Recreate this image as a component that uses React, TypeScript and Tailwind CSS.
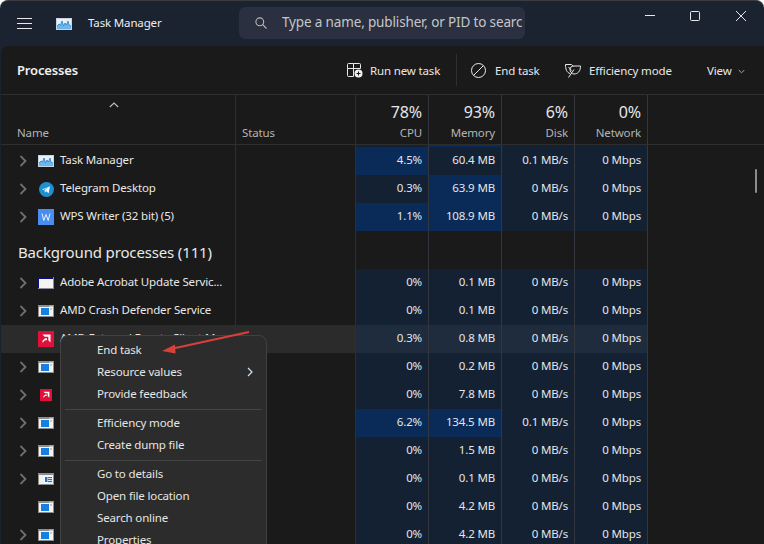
import React from 'react';

type Row = {
  name?: string;
  icon: 'tm' | 'tg' | 'wps' | 'adobe' | 'svc' | 'amd' | 'amdsmall' | 'svc2';
  chevron?: boolean;
  cpu: string;
  mem: string;
  disk: string;
  cpuHot?: boolean;
  memHot?: boolean;
  hover?: boolean;
};

const appRows: Row[] = [
  { name: 'Task Manager', icon: 'tm', chevron: true, cpu: '4.5%', mem: '60.4 MB', disk: '0.1 MB/s', cpuHot: true },
  { name: 'Telegram Desktop', icon: 'tg', chevron: true, cpu: '0.3%', mem: '63.9 MB', disk: '0 MB/s', memHot: true },
  { name: 'WPS Writer (32 bit) (5)', icon: 'wps', chevron: true, cpu: '1.1%', mem: '108.9 MB', disk: '0 MB/s', cpuHot: true, memHot: true },
];

const bgRows: Row[] = [
  { name: 'Adobe Acrobat Update Servic...', icon: 'adobe', chevron: true, cpu: '0%', mem: '0.1 MB', disk: '0 MB/s' },
  { name: 'AMD Crash Defender Service', icon: 'svc', chevron: true, cpu: '0%', mem: '0.1 MB', disk: '0 MB/s' },
  { name: 'AMD External Events Client M', icon: 'amd', cpu: '0.3%', mem: '0.8 MB', disk: '0 MB/s', hover: true },
  { icon: 'svc', chevron: true, cpu: '0%', mem: '0.2 MB', disk: '0 MB/s' },
  { icon: 'amdsmall', chevron: true, cpu: '0%', mem: '7.8 MB', disk: '0 MB/s' },
  { icon: 'svc', chevron: true, cpu: '6.2%', mem: '134.5 MB', disk: '0.1 MB/s', cpuHot: true, memHot: true },
  { icon: 'svc', chevron: true, cpu: '0%', mem: '1.5 MB', disk: '0 MB/s' },
  { icon: 'svc2', chevron: true, cpu: '0%', mem: '0.1 MB', disk: '0 MB/s' },
  { icon: 'svc', cpu: '0%', mem: '4.2 MB', disk: '0 MB/s' },
  { icon: 'svc', chevron: true, cpu: '0%', mem: '4.2 MB', disk: '0 MB/s' },
];

const gridCols = 'grid grid-cols-[235px_120px_73px_73px_73px_73px]';

const RowIcon = ({ kind }: { kind: Row['icon'] }) => {
  if (kind === 'tm')
    return (
      <svg width="16" height="12" viewBox="0 0 16 12">
        <rect width="16" height="12" fill="#c9d3dc" />
        <rect x="1" y="1" width="14" height="10" fill="#e6f1f9" />
        <path d="M1 11V8l2-2 1.5 1L6 3l1.5 5L9 5l1.5 2L12 3l1 4 2 1v3z" fill="#6cb6ee" />
        <path d="M1 8l2-2 1.5 1L6 3l1.5 5L9 5l1.5 2L12 3l1 4 2 1" fill="none" stroke="#2b7fc9" strokeWidth="0.8" />
      </svg>
    );
  if (kind === 'tg')
    return (
      <svg width="15" height="15" viewBox="0 0 15 15">
        <circle cx="7.5" cy="7.5" r="7.5" fill="#1f8fd0" />
        <path d="M3 7.4l8-3.2-1.3 7-2.6-1.9-1.2 1.2-.3-2.2 3.6-3-4.6 2.7z" fill="#e8f5fc" />
      </svg>
    );
  if (kind === 'wps')
    return (
      <svg width="16" height="16" viewBox="0 0 16 16">
        <rect width="16" height="16" fill="#4a8df0" />
        <path d="M4 4.5l1.8 7 2.2-6 2.2 6 1.8-7" fill="none" stroke="#eaf2ff" strokeWidth="1" />
      </svg>
    );
  if (kind === 'adobe')
    return (
      <svg width="16" height="12" viewBox="0 0 16 12">
        <rect width="16" height="12" fill="#8a8a9a" />
        <rect width="15" height="11" fill="#0c0c8a" />
        <rect x="1" y="2" width="14" height="9" fill="#f4f4f4" />
      </svg>
    );
  if (kind === 'amd' || kind === 'amdsmall') {
    const size = kind === 'amd' ? 16 : 12;
    return (
      <svg width={size} height={size} viewBox="0 0 16 16">
        <rect width="16" height="16" fill="#e0103a" />
        <path d="M4.5 3.5h8v8l-2.2-2.2V5.7H6.7z" fill="#fff" />
        <path d="M7 7.2h2v2H7l-2.5 2.5v-2z" fill="#fff" />
      </svg>
    );
  }
  if (kind === 'svc2')
    return (
      <svg width="16" height="12" viewBox="0 0 16 12">
        <rect width="16" height="12" fill="#8d8d8d" />
        <rect x="1" y="2" width="14" height="9" fill="#f2f2f2" />
        <rect x="6" y="3" width="8" height="7" fill="#fff" />
        <rect x="7" y="4" width="2.5" height="5" fill="#1a78d0" />
        <rect x="10" y="4" width="4" height="1.2" fill="#1a78d0" />
        <rect x="10" y="6" width="4" height="1.2" fill="#1a78d0" />
        <rect x="10" y="8" width="4" height="1.2" fill="#1a78d0" />
      </svg>
    );
  return (
    <svg width="16" height="12" viewBox="0 0 16 12">
      <rect width="16" height="12" fill="#8d8d8d" />
      <rect x="1" y="2" width="14" height="9" fill="#f4f4f4" />
      <rect x="3" y="3" width="8" height="7" fill="#1580e0" />
      <rect x="11.5" y="0.7" width="1.2" height="1.2" fill="#eee" />
      <rect x="13.5" y="0.7" width="1.2" height="1.2" fill="#eee" />
      <rect x="12" y="3.5" width="2" height="1" fill="#999" />
    </svg>
  );
};

const Chevron = () => (
  <svg width="8" height="12" viewBox="0 0 8 12" fill="none" stroke="#6f6f6f" strokeWidth="1.8">
    <path d="M1.5 1l5 5-5 5" />
  </svg>
);

const DataCell = ({ value, hot, hover }: { value: string; hot?: boolean; hover?: boolean }) => (
  <div
    className={`flex items-center justify-end pr-[6px] pb-[2px] border-r border-[#33373d] text-[11.5px] text-[#e4e6e8] ${
      hot ? 'bg-[#0a2a57]' : hover ? 'bg-[#1f2c3e]' : 'bg-[#142133]'
    }`}
  >
    {value}
  </div>
);

const ProcessRow = ({ row }: { row: Row }) => (
  <div className={`${gridCols} h-[28px]`}>
    <div className={`flex items-center border-r border-[#2e2e2e] ${row.hover ? 'bg-[#2b2b2b]' : ''}`}>
      <div className="w-[37px] pl-[18px] flex items-center">{row.chevron && <Chevron />}</div>
      <div className="w-[22px] flex items-center justify-center pr-[6px]">
        <RowIcon kind={row.icon} />
      </div>
      <span className="pb-[2px] text-[11.5px] text-[#e8e8e8] whitespace-nowrap">{row.name}</span>
    </div>
    <div className={`border-r border-[#2e2e2e] ${row.hover ? 'bg-[#2b2b2b]' : ''}`} />
    <DataCell value={row.cpu} hot={row.cpuHot} hover={row.hover} />
    <DataCell value={row.mem} hot={row.memHot} hover={row.hover} />
    <DataCell value={row.disk} hover={row.hover} />
    <DataCell value="0 Mbps" hover={row.hover} />
  </div>
);

const HeadCell = ({ pct, label }: { pct: string; label: string }) => (
  <div className="flex flex-col items-end justify-end pr-[6px] pb-[2px] border-r border-[#33373d]">
    <span className="text-[16px] leading-[20px] text-[#e4e6e8]">{pct}</span>
    <span className="text-[11.5px] leading-[18px] mt-[2px] text-[#b4b4b4]">{label}</span>
  </div>
);

const MenuItem = ({ label, arrow }: { label: string; arrow?: boolean }) => (
  <div className="h-[22px] pl-[36px] pr-[13px] pb-[2px] flex items-center justify-between text-[11.5px] text-[#e6e6e6]">
    <span>{label}</span>
    {arrow && (
      <svg width="6" height="10" viewBox="0 0 6 10" fill="none" stroke="#cfe3f0" strokeWidth="1.2">
        <path d="M1 1l4 4-4 4" />
      </svg>
    )}
  </div>
);

const MenuSep = () => <div className="h-px bg-[#454545] mx-[4px] my-[3px]" />;

export default function App() {
  return (
    <div
      className="relative w-[764px] h-[544px] overflow-hidden flex flex-col bg-[#1b2230] border-t border-[#3a3c40] rounded-t-lg tracking-[-0.15px]"
      style={{ fontFamily: '"Noto Sans", "Open Sans", sans-serif' }}
    >
      {/* title bar */}
      <div className="h-[45px] shrink-0 flex items-center">
        <svg className="ml-[17px]" width="15" height="11" viewBox="0 0 15 11" stroke="#e8e8e8" strokeWidth="1">
          <path d="M0 .5h15M0 5.5h15M0 10.5h15" />
        </svg>
        <div className="ml-[24px] flex">
          <RowIcon kind="tm" />
        </div>
        <span className="ml-[16px] w-[72px] pb-[2px] text-[11.5px] text-[#eeeeee] whitespace-nowrap">Task Manager</span>
        <div className="ml-[79px] mb-[1px] w-[286px] h-[32px] rounded-md bg-[#2a3040] flex items-center pl-[16px]">
          <svg width="12" height="12" viewBox="0 0 12 12" fill="none" stroke="#b8b8b8" strokeWidth="1.1">
            <circle cx="4.8" cy="4.8" r="3.9" />
            <path d="M7.7 7.7L11.5 11.5" />
          </svg>
          <span className="ml-[15px] w-[240px] pb-[1px] overflow-hidden text-[13.5px] text-[#c4c6ca] whitespace-nowrap">
            Type a name, publisher, or PID to search
          </span>
        </div>
        <div className="ml-auto flex items-center pb-[16px]">
          <svg width="10" height="2" viewBox="0 0 10 2" className="mr-[35px]">
            <rect width="10" height="1" fill="#e8e8e8" />
          </svg>
          <svg width="10" height="10" viewBox="0 0 10 10" fill="none" stroke="#e8e8e8" className="mr-[36px]">
            <rect x="0.5" y="0.5" width="9" height="9" rx="1" />
          </svg>
          <svg width="10" height="10" viewBox="0 0 10 10" fill="none" stroke="#e8e8e8" className="mr-[18px]">
            <path d="M0 0l10 10M10 0L0 10" />
          </svg>
        </div>
      </div>

      {/* panel */}
      <div className="relative flex-1 ml-px bg-[#1a1a1a] rounded-tl-lg overflow-hidden">
        {/* toolbar */}
        <div className="h-[49px] flex items-center border-b border-[#2f2f2f]">
          <span className="ml-[16px] w-[330px] pt-[2px] text-[13px] font-semibold text-[#f0f0f0]">Processes</span>
          <svg width="16" height="15" viewBox="0 0 16 15" fill="none" stroke="#e8e8e8" strokeWidth="1">
            <path d="M6.5.5h-5a1 1 0 0 0-1 1v4h6zM6.5.5h6a1 1 0 0 1 1 1v4h-7M.5 5.5v7a1 1 0 0 0 1 1h5M6.5 5.5v8" />
            <circle cx="11.5" cy="10.5" r="4" fill="#f0f0f0" stroke="none" />
            <path d="M11.5 8.5v4M9.5 10.5h4" stroke="#1a1a1a" />
          </svg>
          <span className="ml-[7px] w-[72px] pt-[2px] text-[11.5px] text-[#e8e8e8] whitespace-nowrap">Run new task</span>
          <div className="ml-[14px] w-px h-[32px] bg-[#2f2f2f]" />
          <svg className="ml-[14px]" width="15" height="15" viewBox="0 0 15 15" fill="none" stroke="#e8e8e8" strokeWidth="1">
            <circle cx="7.5" cy="7.5" r="7" />
            <path d="M2.6 12.4L12.4 2.6" />
          </svg>
          <span className="ml-[9px] w-[45px] pt-[2px] text-[11.5px] text-[#e8e8e8] whitespace-nowrap">End task</span>
          <svg className="ml-[25px]" width="16" height="15" viewBox="0 0 16 15" fill="none" stroke="#e8e8e8" strokeWidth="1">
            <path d="M5 10.5C1.5 9.5.5 6 .5 1.5H6.5L8.5 3.5" />
            <path d="M15.5 3H8.5C6.5 3 5 4.5 5 6.5S6.5 11 9 11c4 0 6.5-3 6.5-8z" />
            <path d="M3.5 14.5l5.5-8M3.5 4l3 3.5" />
          </svg>
          <span className="ml-[8px] w-[85px] pt-[2px] text-[11.5px] text-[#e8e8e8] whitespace-nowrap">Efficiency mode</span>
          <span className="ml-[33px] w-[26px] pt-[2px] text-[11.5px] text-[#e8e8e8]">View</span>
          <svg className="ml-[5px] mt-[2px]" width="7" height="5" viewBox="0 0 7 5" fill="none" stroke="#a8a8a8">
            <path d="M.7 1l2.8 2.8L6.3 1" />
          </svg>
        </div>

        {/* column header */}
        <div className={`${gridCols} h-[50px] border-b border-[#2f2f2f]`}>
          <div className="relative flex items-end pl-[16px] pb-[2px] border-r border-[#2f2f2f]">
            <svg className="absolute left-[108px] top-[7px]" width="10" height="6" viewBox="0 0 10 6" fill="none" stroke="#bdbdbd" strokeWidth="1.1">
              <path d="M.8 5L5 1l4.2 4" />
            </svg>
            <span className="text-[11.5px] leading-[18px] text-[#b4b4b4]">Name</span>
          </div>
          <div className="flex items-end pl-[6px] pb-[2px] border-r border-[#2f2f2f]">
            <span className="text-[11.5px] leading-[18px] text-[#b4b4b4]">Status</span>
          </div>
          <HeadCell pct="78%" label="CPU" />
          <HeadCell pct="93%" label="Memory" />
          <HeadCell pct="6%" label="Disk" />
          <HeadCell pct="0%" label="Network" />
        </div>

        {/* rows */}
        <div>
          <div className={`${gridCols} h-[2px]`}>
            <div className="border-r border-[#2e2e2e]" />
            <div className="border-r border-[#2e2e2e]" />
            <div className="bg-[#142133] border-r border-[#33373d]" />
            <div className="bg-[#0a2a57] border-r border-[#33373d]" />
            <div className="bg-[#142133] border-r border-[#33373d]" />
            <div className="bg-[#142133] border-r border-[#33373d]" />
          </div>
          {appRows.map(r => (
            <ProcessRow key={r.name} row={r} />
          ))}
          <div className={`${gridCols} h-[38px]`}>
            <div className="flex items-center pl-[17px] pt-[4px] border-r border-[#2e2e2e]">
              <span className="text-[15px] text-[#e8e8e8] whitespace-nowrap">Background processes (111)</span>
            </div>
            <div className="border-r border-[#2e2e2e]" />
            <div className="border-r border-[#33373d]" />
            <div className="border-r border-[#33373d]" />
            <div className="border-r border-[#33373d]" />
            <div className="border-r border-[#33373d]" />
          </div>
          {bgRows.map((r, i) => (
            <ProcessRow key={i} row={r} />
          ))}
        </div>

        {/* scrollbar thumb */}
        <div className="absolute left-[754px] top-[123px] w-[2px] h-[24px] rounded-full bg-[#8c8c8c]" />

        {/* context menu */}
        <div className="absolute left-[59px] top-[289px] w-[207px] h-[240px] pt-[4px] bg-[#2c2c2c] border border-[#414141] rounded-lg">
          <MenuItem label="End task" />
          <MenuItem label="Resource values" arrow />
          <MenuItem label="Provide feedback" />
          <MenuSep />
          <MenuItem label="Efficiency mode" />
          <MenuItem label="Create dump file" />
          <MenuSep />
          <MenuItem label="Go to details" />
          <MenuItem label="Open file location" />
          <MenuItem label="Search online" />
          <MenuItem label="Properties" />
        </div>

        {/* red annotation arrow */}
        <svg className="absolute left-[150px] top-[280px]" width="110" height="30" viewBox="0 0 110 30" fill="none">
          <path d="M98 6L22 22.5" stroke="#d8403c" strokeWidth="2" />
          <path d="M11 25l13-6.5 0.5 9z" fill="#d8403c" />
        </svg>
      </div>
    </div>
  );
}
